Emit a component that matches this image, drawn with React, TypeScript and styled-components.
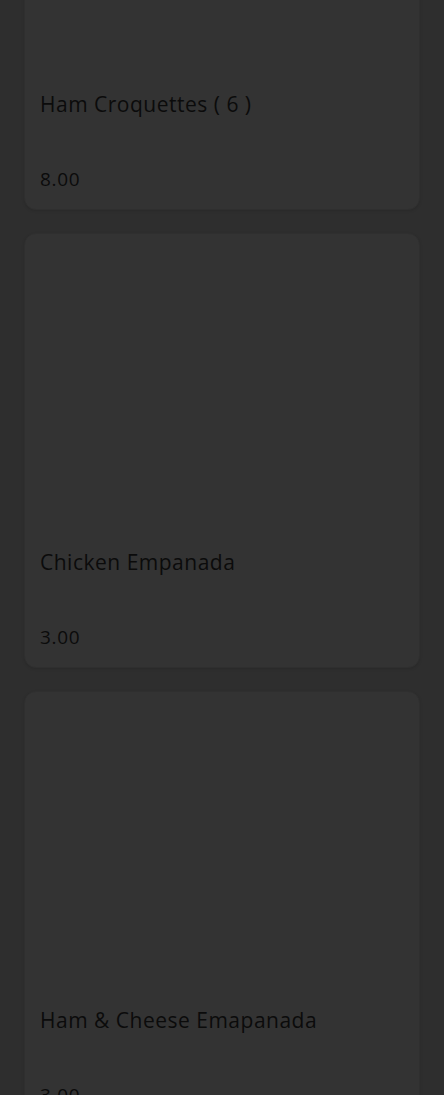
import React from "react";
import styled, { createGlobalStyle } from "styled-components";

const GlobalStyle = createGlobalStyle`
  html, body {
    margin: 0;
    padding: 0;
    background: #2e2e2e;
    overflow: hidden;
  }
  body {
    font-family: "Open Sans", "Liberation Sans", sans-serif;
  }
`;

const Page = styled.div`
  height: 1095px;
  overflow: hidden;
  background: #2e2e2e;
`;

const List = styled.div`
  display: flex;
  flex-direction: column;
  gap: 23px;
  padding: 0 24px;
  margin-top: -225px;
`;

const Card = styled.div`
  background: #333333;
  border: 1px solid #2f2f2f;
  border-radius: 12px;
  box-shadow: 0 1px 3px rgba(0, 0, 0, 0.12);
  padding: 0 15px;
  height: 433px;
  display: flex;
  flex-direction: column;
`;

const ImageArea = styled.div`
  height: 315px;
  flex-shrink: 0;
`;

const Title = styled.div`
  font-size: 21px;
  line-height: 26px;
  font-weight: 500;
  color: #0b0b0b;
  letter-spacing: 0.5px;
`;

const Price = styled.div`
  margin-top: 50px;
  font-size: 19px;
  line-height: 24px;
  font-weight: 500;
  color: #0b0b0b;
  letter-spacing: 0.7px;
`;

const items = [
  { name: "Ham Croquettes ( 6 )", price: "8.00" },
  { name: "Chicken Empanada", price: "3.00" },
  { name: "Ham & Cheese Emapanada", price: "3.00" },
];

const App: React.FC = () => {
  return (
    <Page>
      <GlobalStyle />
      <List>
        {items.map(item => (
          <Card key={item.name}>
            <ImageArea />
            <Title>{item.name}</Title>
            <Price>{item.price}</Price>
          </Card>
        ))}
      </List>
    </Page>
  );
};

export default App;
